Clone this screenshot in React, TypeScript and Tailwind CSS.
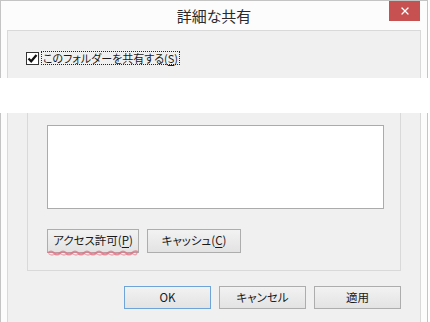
import { X } from 'lucide-react';

const jp = "font-['Noto_Sans_CJK_JP','Noto_Sans',sans-serif] [font-feature-settings:'palt']";

function WinButton({ children, primary = false, className = '' }: { children: React.ReactNode; primary?: boolean; className?: string }) {
    return (
        <div
            className={`${className} flex items-center justify-center border bg-gradient-to-b from-[#f2f2f2] to-[#e3e3e3] text-[11.5px] leading-none text-[#1a1a1a] ${
                primary ? 'border-[#6fa4d8]' : 'border-[#adadad]'
            }`}
        >
            {children}
        </div>
    );
}

export default function App() {
    return (
        <div className={`relative w-[430px] h-[322px] overflow-hidden bg-white ${jp}`}>
            {/* Window frame */}
            <div className="relative w-[428px] h-full border-x border-t border-[#c4c4c4] bg-[#fcfcfc]">
                {/* Title bar */}
                <div className="h-[29px] flex items-center justify-center">
                    <span className="text-[15px] text-[#2b2b2b] pt-[2px]">詳細な共有</span>
                </div>
                <div className="absolute top-0 right-[7px] w-[31px] h-[20px] bg-[#c75050] flex items-center justify-center">
                    <X size={12} strokeWidth={2.5} className="text-white" />
                </div>

                {/* Client panel */}
                <div className="mx-[6px] h-[300px] border border-b-0 border-[#d9d9d9] bg-[#f0f0f0] text-[#1a1a1a]">
                    {/* Share checkbox */}
                    <div className="mt-[20px] ml-[18px] flex items-center h-[14px]">
                        <div className="w-[13px] h-[13px] border border-[#333] bg-white flex items-center justify-center">
                            <svg width="11" height="11" viewBox="0 0 11 11">
                                <path d="M1.5 5.5 L4.2 8.3 L9.5 2" fill="none" stroke="#111" strokeWidth="2.2" />
                            </svg>
                        </div>
                        <div className="ml-[2px] h-[14px] px-[1px] flex items-center border border-dotted border-[#222] text-[11px] leading-none">
                            このフォルダーを共有する(<span className="underline underline-offset-2">S</span>)
                        </div>
                    </div>

                    {/* Permissions group */}
                    <div className="mt-[35px] mx-[19px] h-[171px] border border-[#d9d9d9] pt-[24px] px-[19px]">
                        <div className="w-[337px] h-[84px] border border-[#ababab] bg-white" />
                        <div className="relative mt-[20px] flex gap-[8px]">
                            <WinButton className="w-[92px] h-[24px]">
                                アクセス許可(<span className="underline underline-offset-2">P</span>)
                            </WinButton>
                            <WinButton className="w-[94px] h-[24px]">
                                キャッシュ(<span className="underline underline-offset-2">C</span>)
                            </WinButton>
                            <svg className="absolute left-0 top-[20px]" width="92" height="8" viewBox="0 0 92 8">
                                <path
                                    d="M1 4 Q4 1 7 4 T13 4 T19 4 T25 4 T31 4 T37 4 T43 4 T49 4 T55 4 T61 4 T67 4 T73 4 T79 4 T85 4 T91 3"
                                    fill="none"
                                    stroke="#e46c80"
                                    strokeOpacity="0.75"
                                    strokeWidth="2"
                                />
                                <path
                                    d="M2 5 Q5 7 8 5 T14 5 T20 5 T26 5 T32 5 T38 5 T44 5 T50 5 T56 5 T62 5 T68 5 T74 5 T80 5 T86 5 T90 4"
                                    fill="none"
                                    stroke="#e46c80"
                                    strokeOpacity="0.55"
                                    strokeWidth="1.5"
                                />
                            </svg>
                        </div>
                    </div>

                    {/* Dialog buttons */}
                    <div className="mt-[15px] mr-[19px] flex justify-end gap-[8px]">
                        <WinButton primary className="w-[87px] h-[23px]">OK</WinButton>
                        <WinButton className="w-[87px] h-[23px]">キャンセル</WinButton>
                        <WinButton className="w-[87px] h-[23px]">適用</WinButton>
                    </div>
                </div>
            </div>

            {/* Redacted band */}
            <div className="absolute left-0 top-[78px] w-full h-[35px] bg-white" />
        </div>
    );
}
